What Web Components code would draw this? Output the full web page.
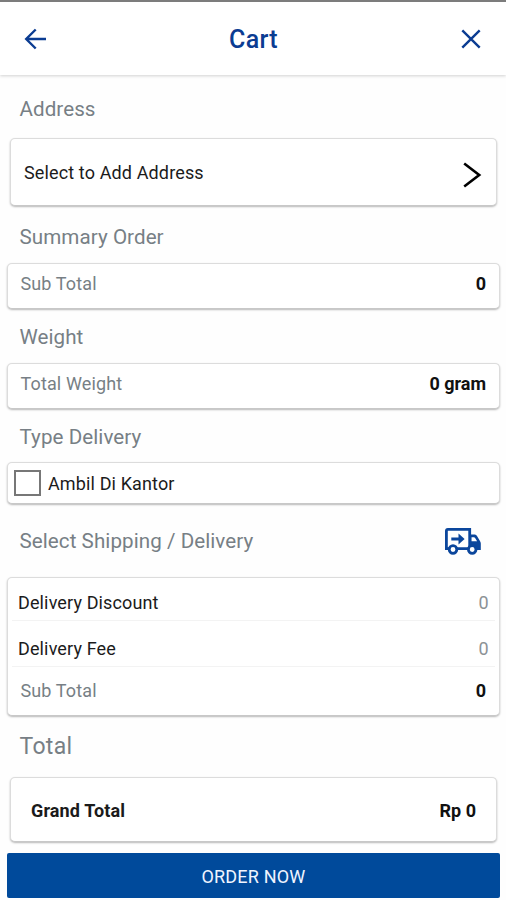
<!DOCTYPE html>
<html lang="en">
<head>
<meta charset="utf-8">
<title>Cart</title>
<style>
html, body { margin: 0; height: 100%; }
body { background: #fefefe; font-family: Roboto, "Liberation Sans", sans-serif; overflow: hidden; }
</style>
</head>
<body>
<cart-page></cart-page>
<script>
const define = (name, html) => customElements.define(name, class extends HTMLElement {
  constructor() {
    super();
    this.attachShadow({ mode: 'open' }).innerHTML = html;
  }
});

define('app-bar', `
<style>
  :host { display: grid; grid-template-columns: 80px 1fr 80px; align-items: center; box-sizing: border-box;
    height: 75px; padding-top: 1px; border-top: 2px solid #7c7c7c; background: #fff; color: #0b3c92;
    box-shadow: 0 1px 3px rgba(0,0,0,.18); }
  h1 { margin: 0; padding: 2px 0 0 1px; text-align: center; font-size: 25px; line-height: 30px; font-weight: 500; letter-spacing: .4px; }
  svg { display: block; fill: none; stroke: currentColor; stroke-width: 2.4; }
  .close { justify-self: end; margin-right: 24px; }
  .back { margin-left: 23px; }
</style>
<svg class="back" width="24" height="24" viewBox="0 0 24 24"><path d="M23 12H3M12.7 2.500L3.200 12l9.500 9.500"/></svg>
<h1><slot></slot></h1>
<svg class="close" width="22" height="22" viewBox="0 0 22 22"><path d="M2.300 2.300l17.400 17.400M19.700 2.300L2.300 19.700"/></svg>`);

define('section-title', `
<style>
  :host { display: flex; justify-content: space-between; align-items: center; box-sizing: border-box;
    height: var(--h); padding: var(--pt, 0) 24px 0 19.500px; color: #777f85;
    font-size: var(--fs, 20.600px); line-height: 26px; letter-spacing: var(--ls, .06px); }
</style>
<span><slot></slot></span><slot name="icon"></slot>`);

define('info-card', `
<style>
  :host { display: flex; flex-direction: column; box-sizing: border-box; height: var(--h); margin: 0 var(--m, 6px) 0 var(--ml, 7px);
    border: 1px solid #dcdcdc; border-bottom-color: #c8c8c8; border-radius: 5px; background: #fff;
    box-shadow: 0 1px 2px rgba(0,0,0,.28); }
</style>
<slot></slot>`);

define('info-row', `
<style>
  :host { display: flex; justify-content: space-between; align-items: center; box-sizing: border-box; height: var(--rh, 100%);
    padding: var(--rt, 0) var(--rr, 13px) var(--rb, 0) var(--rl, 12.500px); font-size: 18px; line-height: 22px; color: #777f85;
    letter-spacing: .13px; white-space: nowrap; }
  .value { color: var(--vc, #111); font-weight: var(--vw, 700); letter-spacing: 0; }
</style>
<slot></slot><span class="value"><slot name="value"></slot></span>`);

define('check-box', `
<style>
  :host { display: flex; align-items: center; gap: 7px; color: #1b1b1b; }
  i { box-sizing: border-box; width: 27px; height: 26px; border: 2px solid #777; background: #fff; }
  span { padding-top: 2px; }
</style>
<i></i><span><slot></slot></span>`);

define('chevron-icon', `
<style>:host { display: block; } svg { display: block; }</style>
<svg width="20" height="28" viewBox="0 0 20 28" fill="none" stroke="#000" stroke-width="2.600"><path d="M2.200 2.500L17.200 14 2.200 25.500"/></svg>`);

define('truck-icon', `
<style>:host { display: block; } svg { display: block; }</style>
<svg width="38" height="28" viewBox="0 0 38 28" fill="none" stroke="#0b469c" stroke-width="2.800">
  <path fill="#0b469c" stroke="none" d="M25 7.500h5c1.500 0 2.600.6 3.300 1.900l2.800 4.800c.5.800.7 1.500.7 2.400v6.400H25z"/>
  <path fill="#fff" stroke="none" d="M27.500 10.300h2.300c.6 0 1 .2 1.300.7l2 3.300h-5.600z"/>
  <path d="M2.400 21.600V3.900c0-1 .5-1.500 1.500-1.500h21.800v19.200z" fill="#fff"/>
  <path d="M7.300 12h9" stroke-width="3"/><path fill="#0b469c" stroke="none" d="M14.500 6.600l6.100 5.400-6.100 5.400z"/>
  <circle cx="9" cy="22.500" r="3.800" fill="#fff"/><circle cx="28.200" cy="22.500" r="3.800" fill="#fff"/>
</svg>`);

define('order-button', `
<style>
  :host { display: block; margin: 11px 6px 0 7px; }
  button { display: block; width: 100%; height: 45px; padding: 2px 0 0; border: 0; border-radius: 2px; background: #004a9b;
    color: #f0f5ff; font: 400 18px/22px Roboto, sans-serif; letter-spacing: .2px; }
</style>
<button><slot></slot></button>`);

define('cart-page', `
<style>
  :host { display: block; }
  .dark { color: #1b1b1b; }
  .line { border-bottom: 1px solid #f3f3f3; margin: 0 4px; --vw: 400; --vc: #8c9296; --rl: 6px; --rr: 6.500px; color: #1b1b1b; }
</style>
<app-bar>Cart</app-bar>
<section-title style="--h:63px;--pt:5px">Address</section-title>
<info-card style="--h:68px;--ml:10px;--m:9px"><info-row class="dark" style="--rl:13px;--rr:14px;--rt:1px">Select to Add Address<chevron-icon slot="value" style="margin-top:5px"></chevron-icon></info-row></info-card>
<section-title style="--h:57px;--pt:5px">Summary Order</section-title>
<info-card style="--h:46px"><info-row style="--rb:4px">Sub Total<span slot="value">0</span></info-row></info-card>
<section-title style="--h:54px;--pt:2px">Weight</section-title>
<info-card style="--h:46px"><info-row style="--rb:4px">Total Weight<span slot="value">0 gram</span></info-row></info-card>
<section-title style="--h:53px;--pt:3px">Type Delivery</section-title>
<info-card style="--h:42px"><info-row class="dark" style="--rl:6px"><check-box>Ambil Di Kantor</check-box></info-row></info-card>
<section-title style="--h:73px;--pt:1px">Select Shipping / Delivery<truck-icon slot="icon"></truck-icon></section-title>
<info-card style="--h:139px">
  <info-row class="line" style="--rh:43px;--rt:7px">Delivery Discount<span slot="value">0</span></info-row>
  <info-row class="line" style="--rh:46px;--rt:10px">Delivery Fee<span slot="value">0</span></info-row>
  <info-row style="--rh:48px">Sub Total<span slot="value">0</span></info-row>
</info-card>
<section-title style="--h:61px;--fs:23px;--ls:.3px">Total</section-title>
<info-card style="--h:65px;--ml:10px;--m:9px"><info-row class="dark" style="--rl:20px;--rr:20px;--rt:2px"><b>Grand Total</b><span slot="value">Rp 0</span></info-row></info-card>
<order-button>ORDER NOW</order-button>`);
</script>
</body>
</html>
